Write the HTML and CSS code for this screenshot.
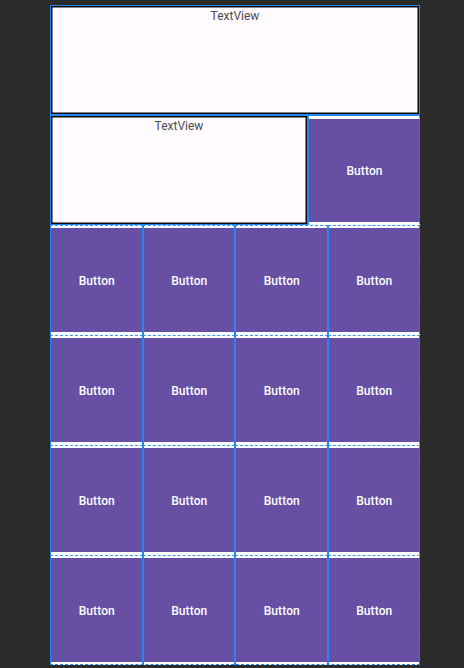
FILE: index.html
```html
<!DOCTYPE html>
<html>
<head>
<meta charset="utf-8">
<link rel="stylesheet" href="styles.css">
</head>
<body>
<div class="screen">
  <div class="row">
    <div class="tv">TextView</div>
  </div>
  <div class="row">
    <div class="tv tv2">TextView</div>
    <div class="cell single"><span class="btn">Button</span></div>
  </div>
  <div class="row grid">
    <div class="cell"><span class="btn">Button</span></div>
    <div class="cell"><span class="btn">Button</span></div>
    <div class="cell"><span class="btn">Button</span></div>
    <div class="cell"><span class="btn">Button</span></div>
  </div>
  <div class="row grid">
    <div class="cell"><span class="btn">Button</span></div>
    <div class="cell"><span class="btn">Button</span></div>
    <div class="cell"><span class="btn">Button</span></div>
    <div class="cell"><span class="btn">Button</span></div>
  </div>
  <div class="row grid">
    <div class="cell"><span class="btn">Button</span></div>
    <div class="cell"><span class="btn">Button</span></div>
    <div class="cell"><span class="btn">Button</span></div>
    <div class="cell"><span class="btn">Button</span></div>
  </div>
  <div class="row grid">
    <div class="cell"><span class="btn">Button</span></div>
    <div class="cell"><span class="btn">Button</span></div>
    <div class="cell"><span class="btn">Button</span></div>
    <div class="cell"><span class="btn">Button</span></div>
  </div>
</div>
</body>
</html>
```
FILE: styles.css
```css
html, body {
  margin: 0;
  padding: 0;
}
body {
  background: #2b2b2c;
  width: 464px;
  height: 668px;
  overflow: hidden;
  font-family: Roboto, "Noto Sans", "Liberation Sans", sans-serif;
}
.screen {
  position: relative;
  margin: 5px 0 0 50px;
  width: 370px;
  height: 660px;
  background: #ffffff;
  display: flex;
  flex-direction: column;
}
.screen::after {
  content: "";
  position: absolute;
  inset: 0;
  border: 1px dashed #1f86f0;
  pointer-events: none;
}
.row {
  height: 110px;
  flex: 0 0 110px;
  display: flex;
  box-sizing: border-box;
}
.tv {
  flex: 1;
  box-sizing: border-box;
  border: 1px solid #2587f0;
  box-shadow: inset 0 0 0 1.5px #0c0c0c;
  background: #fffbfe;
  padding-top: 3px;
  text-align: center;
  font-size: 12px;
  line-height: 14px;
  color: #4b4950;
}
.tv2 {
  flex: 0 0 258px;
}
.cell {
  box-sizing: border-box;
  background: #ffffff;
  border-top: 1px dashed #3d98f4;
  padding: 2px 0 3px;
  display: flex;
}
.single {
  flex: 1;
  border-top: 1px solid #2587f0;
  border-left: 1px solid #2587f0;
  padding-top: 3px;
}
.grid {
  display: grid;
  grid-template-columns: repeat(4, 1fr);
}
.grid .cell {
  border-left: 1px solid #2587f0;
  box-shadow: -1px 0 0 #2587f0;
}
.grid .cell:first-child {
  box-shadow: none;
}
.btn {
  flex: 1;
  background: #6750a4;
  color: #ffffff;
  display: flex;
  align-items: center;
  justify-content: center;
  font-size: 12px;
  font-weight: 500;
  letter-spacing: 0.1px;
  padding-top: 1px;
}
```
